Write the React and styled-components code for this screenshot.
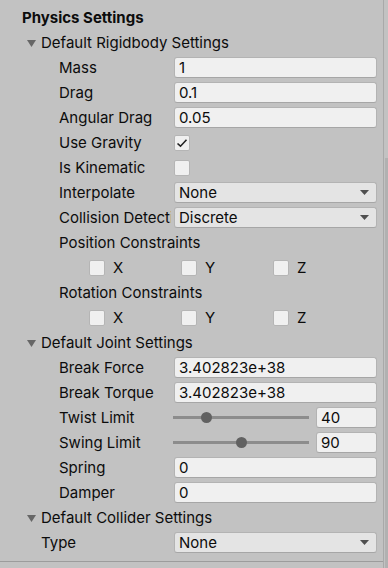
import React from "react";
import styled, { createGlobalStyle } from "styled-components";

const GlobalStyle = createGlobalStyle`
  html, body {
    margin: 0;
    padding: 0;
    background: #c2c2c2;
  }
  body {
    font-family: Inter, "Noto Sans", "Liberation Sans", sans-serif;
    color: #0c0c0c;
  }
`;

const Page = styled.div`
  display: flex;
  height: 568px;
  background: #c2c2c2;
  overflow: hidden;
`;

const Panel = styled.div`
  flex: 1;
  align-self: flex-start;
  padding: 5px 0 6px 0;
  border-bottom: 1px solid #9c9c9c;
`;

const ScrollTrack = styled.div`
  width: 4px;
  border-left: 1px solid #a9a9a9;
  display: flex;
  flex-direction: column;
`;

const ScrollThumb = styled.div`
  margin-top: 158px;
  margin-left: 1px;
  flex: 1;
  background: #b1b1b1;
`;

const Title = styled.div`
  height: 25px;
  display: flex;
  align-items: center;
  padding-left: 22px;
  font-size: 15px;
  font-weight: 700;
`;

const Row = styled.div`
  height: 25px;
  display: flex;
  align-items: center;
  padding-left: ${(p) => p.$indent}px;
  padding-right: 6px;
  font-size: 15px;
`;

const Foldout = styled(Row)`
  gap: 5px;
`;

const Triangle = styled.svg`
  width: 9px;
  height: 7px;
  margin-top: 2px;
  flex-shrink: 0;
`;

const Label = styled.div`
  flex: 0 0 ${(p) => 174 - p.$indent - 3}px;
  margin-right: 3px;
  white-space: nowrap;
  overflow: hidden;
`;

const TextField = styled.div`
  flex: 1;
  height: 21px;
  box-sizing: border-box;
  display: flex;
  align-items: center;
  padding-left: 4px;
  background: #f0f0f0;
  border: 1px solid #b3b3b3;
  border-bottom-color: #a6a6a6;
  border-radius: 3px;
  font-size: 15px;
  ${(p) => p.$width && `flex: 0 0 ${p.$width}px;`}
`;

const Dropdown = styled(TextField)`
  background: #e4e4e4;
  justify-content: space-between;
  padding-right: 7px;
`;

const Arrow = styled.svg`
  width: 9px;
  height: 5px;
`;

const Box = styled.div`
  width: 16px;
  height: 16px;
  box-sizing: border-box;
  background: #f0f0f0;
  border: 1px solid #b5b5b5;
  border-radius: 2px;
  display: flex;
  align-items: center;
  justify-content: center;
  flex-shrink: 0;
`;

const Axes = styled.div`
  display: flex;
`;

const Axis = styled.div`
  width: 92px;
  display: flex;
  align-items: center;
  gap: 8px;
`;

const SliderTrack = styled.div`
  flex: 1;
  position: relative;
  height: 3px;
  background: #8c8c8c;
  margin-left: -1px;
  margin-right: 7px;
`;

const Thumb = styled.div`
  position: absolute;
  top: -4px;
  width: 11px;
  height: 11px;
  margin-left: -5.5px;
  border-radius: 50%;
  background: #616161;
`;

const Check = () => (
  <svg width="12" height="10" viewBox="0 0 12 10">
    <path d="M1.5 5.5 L4.5 8.2 L10.5 1.8" fill="none" stroke="#222" strokeWidth="1.6" />
  </svg>
);

const Fold = ({ indent, children }) => (
  <Foldout $indent={indent}>
    <Triangle viewBox="0 0 9 7">
      <path d="M0 0 H9 L4.5 7 Z" fill="#666" />
    </Triangle>
    {children}
  </Foldout>
);

const Field = ({ label, value, indent = 59 }) => (
  <Row $indent={indent}>
    <Label $indent={indent}>{label}</Label>
    <TextField>{value}</TextField>
  </Row>
);

const Select = ({ label, value, indent = 59 }) => (
  <Row $indent={indent}>
    <Label $indent={indent}>{label}</Label>
    <Dropdown>
      {value}
      <Arrow viewBox="0 0 9 5">
        <path d="M0 0 H9 L4.5 5 Z" fill="#4f4f4f" />
      </Arrow>
    </Dropdown>
  </Row>
);

const Toggle = ({ label, checked }) => (
  <Row $indent={59}>
    <Label $indent={59}>{label}</Label>
    <Box>{checked && <Check />}</Box>
  </Row>
);

const Constraints = () => (
  <Row $indent={89}>
    <Axes>
      {["X", "Y", "Z"].map((a) => (
        <Axis key={a}>
          <Box />
          {a}
        </Axis>
      ))}
    </Axes>
  </Row>
);

const Slider = ({ label, value, max = 180 }) => {
  const pct = value / max;
  return (
    <Row $indent={59}>
      <Label $indent={59}>{label}</Label>
      <SliderTrack>
        <Thumb style={{ left: `calc(5.5px + (100% - 11px) * ${pct})` }} />
      </SliderTrack>
      <TextField $width={61}>{value}</TextField>
    </Row>
  );
};

const App = () => {
  return (
    <Page>
      <GlobalStyle />
      <Panel>
        <Title>Physics Settings</Title>

        <Fold indent={27}>Default Rigidbody Settings</Fold>
        <Field label="Mass" value="1" />
        <Field label="Drag" value="0.1" />
        <Field label="Angular Drag" value="0.05" />
        <Toggle label="Use Gravity" checked />
        <Toggle label="Is Kinematic" />
        <Select label="Interpolate" value="None" />
        <Select label="Collision Detection" value="Discrete" />
        <Row $indent={59}>Position Constraints</Row>
        <Constraints />
        <Row $indent={59}>Rotation Constraints</Row>
        <Constraints />

        <Fold indent={27}>Default Joint Settings</Fold>
        <Field label="Break Force" value="3.402823e+38" />
        <Field label="Break Torque" value="3.402823e+38" />
        <Slider label="Twist Limit" value={40} />
        <Slider label="Swing Limit" value={90} />
        <Field label="Spring" value="0" />
        <Field label="Damper" value="0" />

        <Fold indent={27}>Default Collider Settings</Fold>
        <Select label="Type" value="None" indent={41} />
      </Panel>
      <ScrollTrack>
        <ScrollThumb />
      </ScrollTrack>
    </Page>
  );
};

export default App;
